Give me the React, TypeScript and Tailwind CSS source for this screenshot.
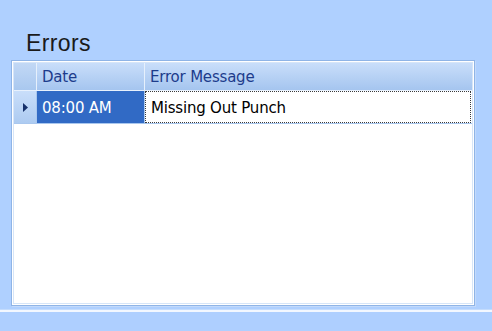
const font = { fontFamily: '"Liberation Sans", Arial, sans-serif' };
const gridFont = { fontFamily: '"DejaVu Sans", Verdana, sans-serif' };

function RowArrow() {
  return (
    <svg width="5" height="9" viewBox="0 0 5 9" className="block">
      <path d="M0 0 L5 4.5 L0 9 Z" fill="#15306b" />
    </svg>
  );
}

export default function App() {
  return (
    <div
      className="w-[492px] h-[331px] bg-[#afd0ff] flex flex-col overflow-hidden"
      style={font}
    >
      {/* group area */}
      <div className="h-[309px] flex flex-col pl-[11px] pr-[17px]">
        <div className="h-[60px] flex items-end pl-[15px] pb-[5px]">
          <span className="text-[23px] leading-none text-[#1a1a1a] tracking-[0.4px]">
            Errors
          </span>
        </div>

        {/* grid */}
        <div
          className="h-[246px] border border-[#8fb4e6] bg-white p-px shadow-[1px_1px_0_#c3dafb]"
          style={gridFont}
        >
          <div className="h-full border border-[#d6e5f8] bg-white flex flex-col">
            {/* header */}
            <div className="h-[28px] flex bg-gradient-to-b from-[#c9defa] to-[#a5c5ef] border-b border-[#e8f1fd] text-[15px] text-[#1d3c8c] tracking-[-0.2px]">
              <div className="w-[23px] border-r border-[#e6f0fc] bg-gradient-to-b from-[#c2d8f5] to-[#a9c8ef]" />
              <div className="w-[108px] border-r border-[#e6f0fc] flex items-center pl-[5px] pt-[2px]">
                Date
              </div>
              <div className="flex-1 flex items-center pl-[5px] pt-[2px]">Error Message</div>
            </div>

            {/* row */}
            <div className="h-[33px] flex text-[15px] tracking-[-0.2px] border-b border-[#a9c7ee]">
              <div className="w-[23px] flex items-center justify-center border-r border-[#a9c7ee] bg-gradient-to-b from-[#c9defa] to-[#adcbf1]">
                <RowArrow />
              </div>
              <div className="w-[108px] bg-[#316ac5] text-white flex items-center pl-[5px] pt-[3px] border-r border-[#a9c7ee]">
                08:00 AM
              </div>
              <div className="flex-1 flex items-center border border-dotted border-[#3a3a3a] pl-[5px] pt-[3px] text-black mr-px">
                Missing Out Punch
              </div>
            </div>

            <div className="flex-1 bg-white" />
          </div>
        </div>
      </div>

      {/* bottom separator */}
      <div className="h-px bg-[#c4dcfd]" />
      <div className="h-[2px] bg-[#f2f7ff]" />
      <div className="flex-1 bg-[#aecfff]" />
    </div>
  );
}
